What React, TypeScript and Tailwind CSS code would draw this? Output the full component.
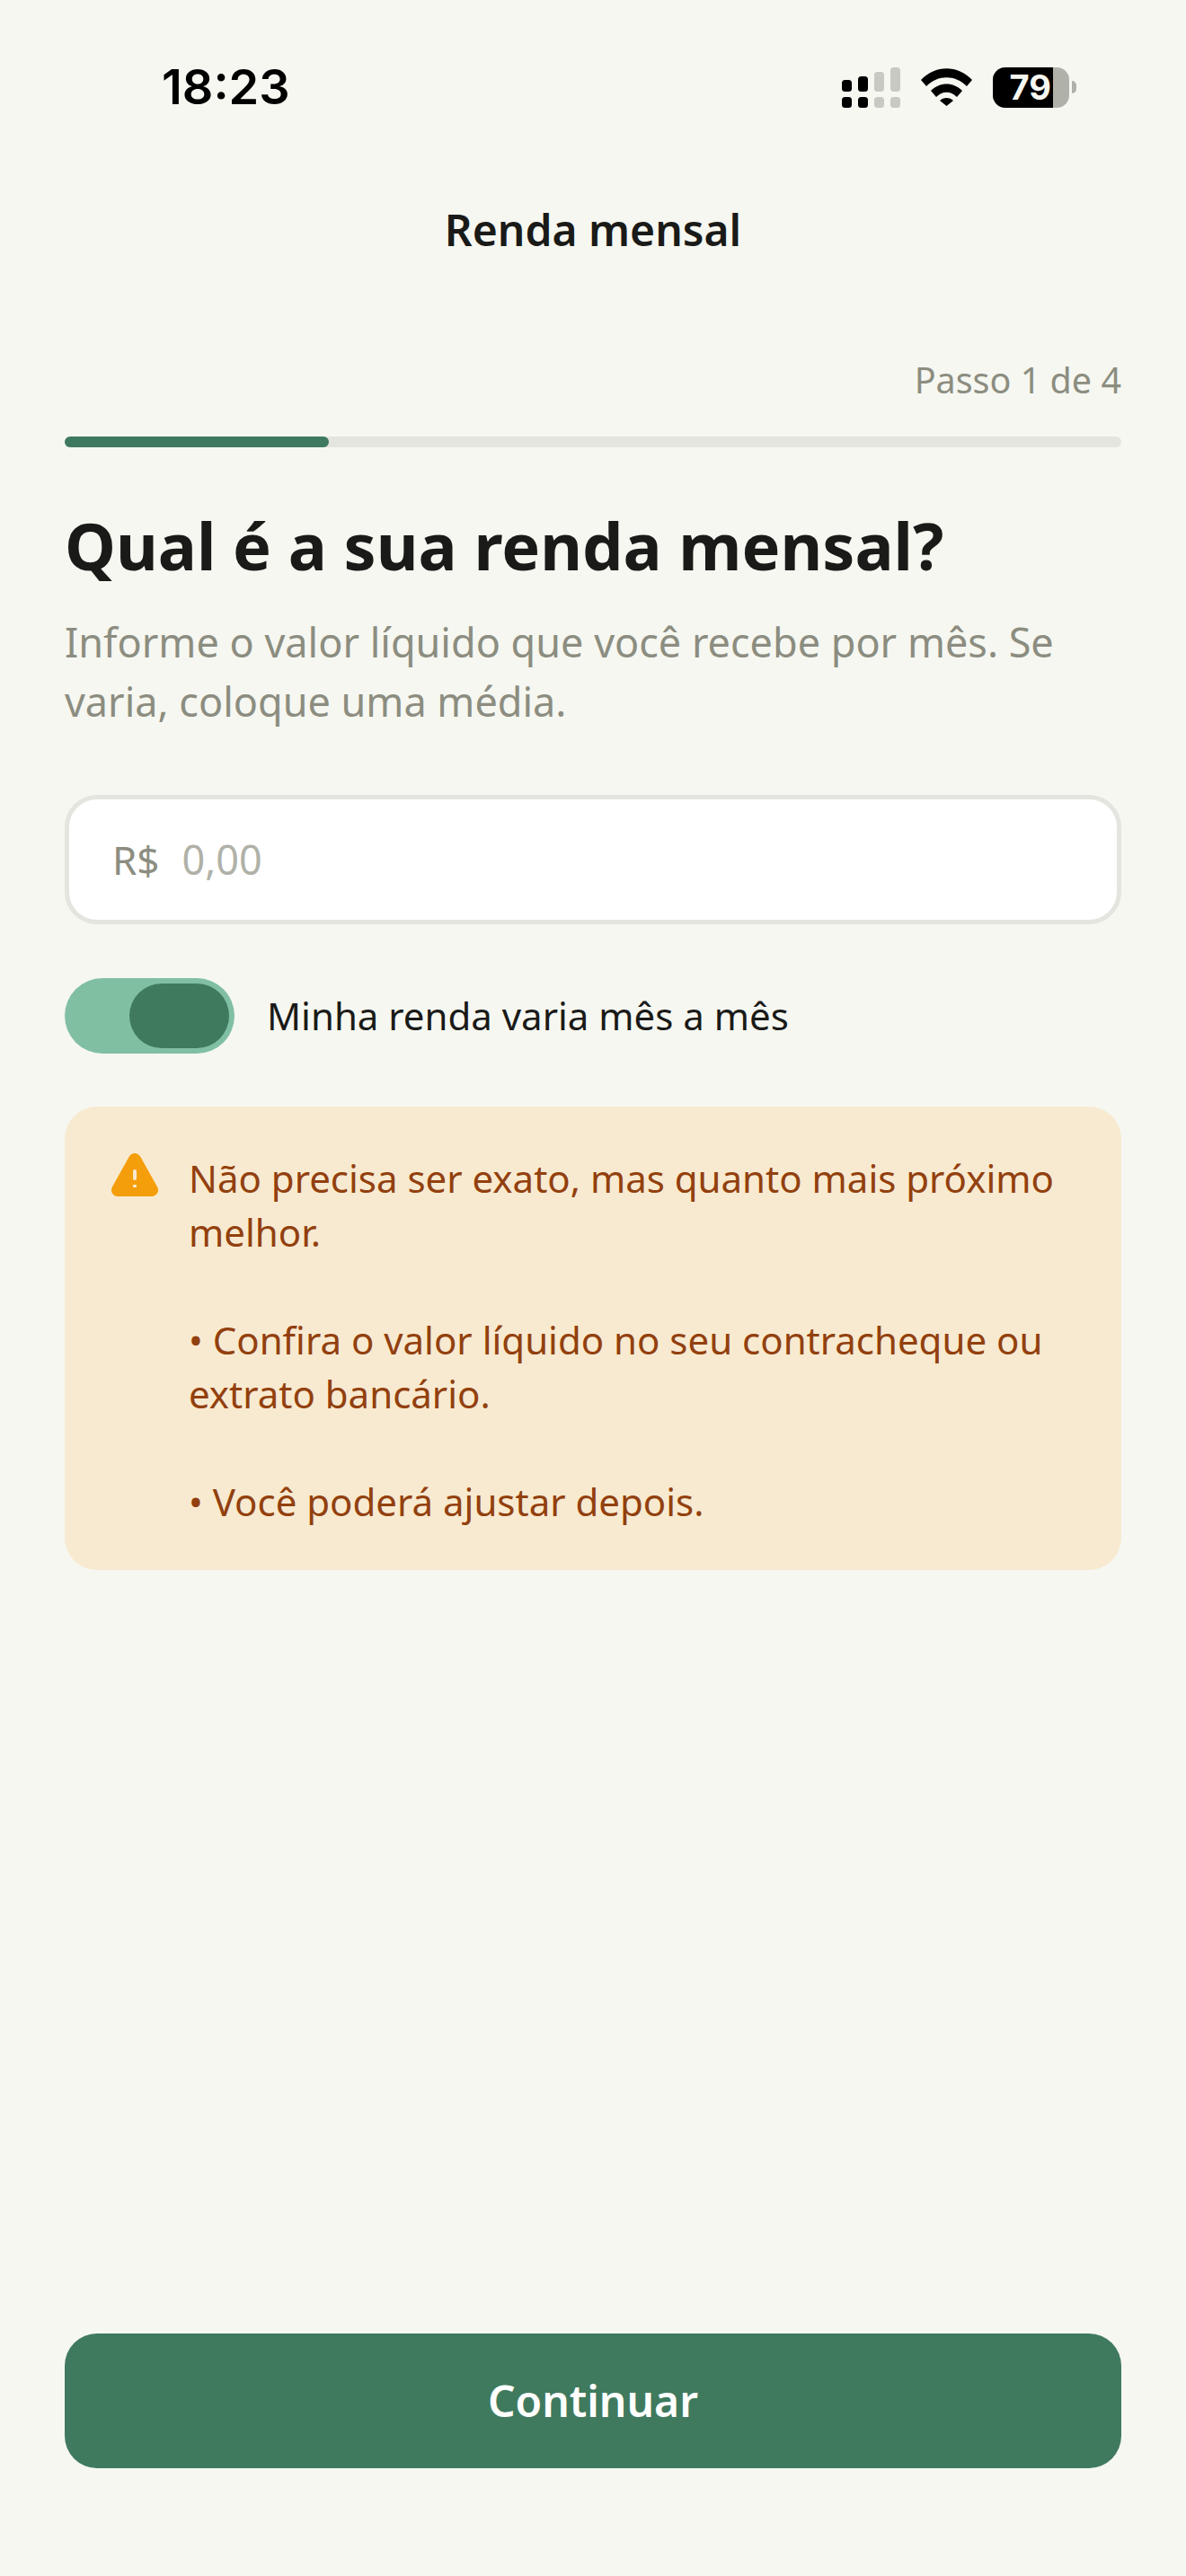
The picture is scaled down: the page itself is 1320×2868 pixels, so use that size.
const noto = { fontFamily: '"Noto Sans", sans-serif' }

function StatusBar() {
  return (
    <div className="flex h-[142px] shrink-0 items-center justify-between pt-[52px] pl-[180px] pr-[122px]">
      <span className="text-[54px] font-semibold leading-none text-black" style={{ fontFamily: 'Inter, sans-serif' }}>
        18:23
      </span>
      <div className="flex items-center">
        <svg width="65" height="45" viewBox="0 0 65 45" className="mr-[23px]">
          <rect x="0" y="14" width="11" height="13" rx="3.5" fill="#000" />
          <rect x="18" y="10" width="11" height="17" rx="3.5" fill="#000" />
          <rect x="36" y="5" width="11" height="22" rx="3.5" fill="#c9c9c3" />
          <rect x="54" y="0" width="11" height="27" rx="3.5" fill="#c9c9c3" />
          <rect x="0" y="33" width="11" height="12" rx="3.5" fill="#000" />
          <rect x="18" y="33" width="11" height="12" rx="3.5" fill="#000" />
          <rect x="36" y="33" width="11" height="12" rx="3.5" fill="#c9c9c3" />
          <rect x="54" y="33" width="11" height="12" rx="3.5" fill="#c9c9c3" />
        </svg>
        <svg width="57" height="42" viewBox="0 0 57 42" className="mr-[23px]">
          <path d="M0 13 C16 -4 41 -4 57 13 L51 20 C38 7 19 7 6 20 Z" fill="#000" />
          <path d="M11 25 C21 15 36 15 46 25 L40 32 C33 25 24 25 17 32 Z" fill="#000" />
          <path d="M21 36 C25 32 32 32 36 36 L28.5 42 Z" fill="#000" />
        </svg>
        <div className="flex h-[45px] w-[85px] items-center overflow-hidden rounded-[14px] bg-[#b0b1a8]">
          <div className="flex h-full w-[67px] items-center justify-end bg-black pr-[2px]">
            <span className="text-[38px] font-bold leading-none text-[#f6f7f1]" style={{ fontFamily: 'Inter, sans-serif' }}>79</span>
          </div>
        </div>
        <div className="ml-[3px] h-[14px] w-[5px] rounded-r-full bg-[#b0b1a8]" />
      </div>
    </div>
  )
}

export default function App() {
  return (
    <div className="flex h-[2868px] w-[1320px] flex-col bg-[#f6f7f1]" style={noto}>
      <StatusBar />
      <div className="mt-[80px] text-center text-[48px] font-semibold leading-[68px] text-[#1a1a18]">Renda mensal</div>

      <div className="flex flex-1 flex-col px-[72px]">
        <div className="mt-[106px] text-right text-[39.5px] leading-[54px] text-[#8c8d80]">Passo 1 de 4</div>
        <div className="mt-[36px] h-[12px] w-full rounded-full bg-[#e4e5de]">
          <div className="h-full w-1/4 rounded-full bg-[#3f7a5e]" />
        </div>

        <h1 className="mt-[61px] text-[72px] font-bold leading-[96px] text-[#1a1a18]">Qual é a sua renda mensal?</h1>
        <p className="mt-[27px] text-[45px] leading-[66px] text-[#8c8d80]">
          Informe o valor líquido que você recebe por mês. Se varia, coloque uma média.
        </p>

        <div className="mt-[71px] flex h-[144px] items-center rounded-[36px] border-[5px] border-[#e4e5de] bg-white pl-[48px] pr-[50px]">
          <span className="text-[44px] text-[#8c8d80]">R$</span>
          <span className="ml-[25px] text-[45px] text-[#b0b1a8]">0,00</span>
        </div>

        <div className="mt-[60px] flex items-center">
          <div className="flex h-[84px] w-[189px] items-center justify-end rounded-full bg-[#81bfa3] pr-[6px]">
            <div className="h-[72px] w-[111px] rounded-full bg-[#3f7a5e]" />
          </div>
          <span className="ml-[36px] text-[42px] leading-[60px] text-[#1a1a18]">Minha renda varia mês a mês</span>
        </div>

        <div className="mt-[59px] flex rounded-[36px] bg-[#f8ead0] pl-[52px] pr-[48px] pt-[50px] pb-[46px]">
          <svg width="52" height="48" viewBox="0 0 52 48" className="mt-[2px] shrink-0">
            <path d="M26 7 L45 41 H7 Z" fill="#f59e0b" stroke="#f59e0b" strokeWidth="14" strokeLinejoin="round" />
            <rect x="24" y="18" width="4" height="12" rx="2" fill="#f8ead0" />
            <rect x="24" y="35" width="4" height="3" rx="1" fill="#f8ead0" />
          </svg>
          <p className="ml-[34px] whitespace-pre-line text-[42px] leading-[60px] text-[#92400e]">
            {'Não precisa ser exato, mas quanto mais próximo melhor.\n\n• Confira o valor líquido no seu contracheque ou extrato bancário.\n\n• Você poderá ajustar depois.'}
          </p>
        </div>

        <button className="mt-auto mb-[120px] h-[150px] w-full rounded-[36px] bg-[#3f7a5e] text-[48px] font-semibold text-white">
          Continuar
        </button>
      </div>
    </div>
  )
}
